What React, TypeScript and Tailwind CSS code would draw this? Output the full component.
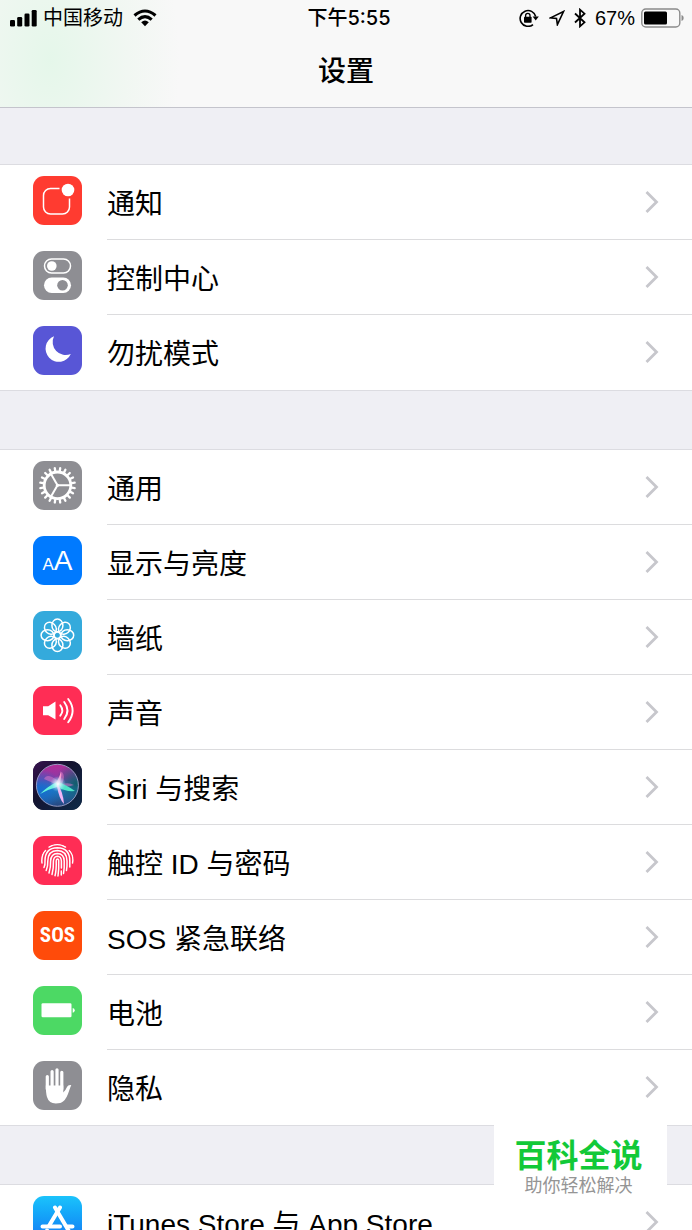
import type { ReactNode } from 'react'

interface Row {
  label: string
  icon: ReactNode
}

interface TileProps {
  className: string
  children: ReactNode
}

const Tile = ({ className, children }: TileProps) => (
  <svg
    viewBox="0 0 49 49"
    aria-hidden="true"
    className={`size-[49px] rounded-[11px] ${className}`}
  >
    {children}
  </svg>
)

const TextTile = ({ className, children }: TileProps) => (
  <span
    aria-hidden="true"
    className={`size-[49px] rounded-[11px] flex justify-center text-white ${className}`}
  >
    {children}
  </span>
)

const NotificationsIcon = () => (
  <Tile className="bg-[#ff3b30]">
    <path
      d="M26.5 12.5H17.5a7 7 0 0 0-7 7V31a7 7 0 0 0 7 7H29.5a7 7 0 0 0 7-7V22.5"
      fill="none"
      stroke="white"
      strokeWidth="1.5"
    />
    <circle cx="35" cy="14" r="6.3" fill="white" />
  </Tile>
)

const ControlCenterIcon = () => (
  <Tile className="bg-[#8e8e93]">
    <rect x="11.5" y="8" width="26" height="14" rx="7" fill="none" stroke="white" strokeWidth="1.5" />
    <circle cx="18.8" cy="15" r="4.8" fill="white" />
    <rect x="11" y="26.5" width="27" height="15.5" rx="7.7" fill="white" />
    <circle cx="29.5" cy="34.2" r="5.3" fill="#8e8e93" />
  </Tile>
)

const MoonIcon = () => (
  <Tile className="bg-[#5856d6]">
    <path d="M21 10.3A13.2 13.2 0 1 0 37.8 28A13 13 0 0 1 21 10.3Z" fill="white" />
  </Tile>
)

const GearIcon = () => (
  <Tile className="bg-[#8e8e93]">
    <g transform="translate(24.5 24.3)" stroke="white" fill="none">
      <circle r="13.3" strokeWidth="2.8" />
      {Array.from({ length: 20 }, (_, i) => (
        <path key={i} d="M14.5 0H17.4" strokeWidth="2.3" strokeLinecap="round" transform={`rotate(${i * 18 + 9})`} />
      ))}
      {[0, 120, 240].map((angle) => (
        <path key={angle} d="M0 0H13" strokeWidth="2" transform={`rotate(${angle})`} />
      ))}
      <circle r="1.6" fill="white" stroke="none" />
    </g>
  </Tile>
)

const DisplayIcon = () => (
  <TextTile className="bg-[#007aff] items-baseline leading-[49px] font-['Liberation_Sans',sans-serif]">
    <span className="text-[17px] font-medium">A</span>
    <span className="text-[28px]">A</span>
  </TextTile>
)

const WallpaperIcon = () => (
  <Tile className="bg-[#34aadc]">
    <g transform="translate(24.4 24.3)" stroke="white" strokeWidth="1.5" fill="none">
      {[0, 45, 90, 135, 180, 225, 270, 315].map((angle) => (
        <ellipse key={angle} cy="-9.9" rx="5.5" ry="6.4" transform={`rotate(${angle})`} />
      ))}
      <circle r="3.2" />
    </g>
  </Tile>
)

const SoundIcon = () => (
  <Tile className="bg-[#ff2d55]">
    <path d="M10 20.2h5.2L22.5 15.5V33.5L15.2 29.2H10Z" fill="white" />
    <g fill="none" stroke="white" strokeWidth="1.9" strokeLinecap="round">
      <path d="M27.3 19.3Q31.3 24.5 27.3 29.7" />
      <path d="M31.2 16Q37.8 24.5 31.2 33" />
      <path d="M35.2 13Q44 24.5 35.2 36.3" />
    </g>
  </Tile>
)

const SiriIcon = () => (
  <Tile className="bg-[#171635]">
    <defs>
      <linearGradient id="siri-bg" x1="0" y1="0" x2="1" y2="1">
        <stop offset="0" stopColor="#3a1150" />
        <stop offset="0.4" stopColor="#14132f" />
        <stop offset="1" stopColor="#0d2b49" />
      </linearGradient>
      <linearGradient id="siri-orb" x1="0.4" y1="0" x2="0.5" y2="1">
        <stop offset="0" stopColor="#b52c98" />
        <stop offset="0.35" stopColor="#8a3aa5" />
        <stop offset="0.6" stopColor="#1e7fc2" />
        <stop offset="1" stopColor="#27457f" />
      </linearGradient>
      <radialGradient id="siri-left" cx="0.1" cy="0.6" r="0.5">
        <stop offset="0" stopColor="#156bd0" />
        <stop offset="1" stopColor="#156bd0" stopOpacity="0" />
      </radialGradient>
      <radialGradient id="siri-right" cx="0.95" cy="0.45" r="0.5">
        <stop offset="0" stopColor="#115c6b" />
        <stop offset="1" stopColor="#115c6b" stopOpacity="0" />
      </radialGradient>
      <radialGradient id="siri-glow">
        <stop offset="0" stopColor="white" />
        <stop offset="0.4" stopColor="#d8f4ff" stopOpacity="0.7" />
        <stop offset="1" stopColor="#8fd8ff" stopOpacity="0" />
      </radialGradient>
    </defs>
    <rect width="49" height="49" fill="url(#siri-bg)" />
    <circle cx="24.4" cy="24.3" r="21" fill="url(#siri-orb)" />
    <circle cx="24.4" cy="24.3" r="21" fill="url(#siri-left)" />
    <circle cx="24.4" cy="24.3" r="21" fill="url(#siri-right)" />
    <path d="M11 18Q13 13 19 16Q24 18 26 22Q27 10 29 11Q33 15 29 23Q36 21 41 24Q34 27 26 25Q16 20 11 18Z" fill="#e879c9" opacity="0.5" />
    <path d="M7 33Q15 25 24 21Q29 22 24 26Q16 28 7 33Z" fill="#63f2dd" />
    <path d="M24 21Q32 23 42 30Q33 31 24 26Z" fill="#4de3c7" />
    <path d="M24 22Q30 30 31 43Q26 38 24 25Z" fill="#f3b5f5" />
    <path d="M23 22Q27 15 28 10Q29 17 26 24Z" fill="#ff9ad2" />
    <circle cx="25" cy="23" r="8" fill="url(#siri-glow)" />
    <circle cx="24.4" cy="24.3" r="21" fill="none" stroke="#a5a9cf" strokeWidth="1" opacity="0.85" />
  </Tile>
)

const FingerprintIcon = () => (
  <Tile className="bg-[#ff2d55]">
    <clipPath id="finger">
      <circle cx="24.3" cy="24.5" r="16.6" />
    </clipPath>
    <g fill="none" stroke="white" strokeWidth="1.5" strokeLinecap="round" clipPath="url(#finger)">
      <path d="M16 11Q24.3 6 32.5 11" />
      <path d="M9 27Q8 19 12.5 14.5M36.2 14.5Q41 19 39.6 27" />
      <path d="M11 31.5Q12.3 29 12 25Q12 12 24.3 11.8Q36.7 12 36.8 25V31" />
      <path d="M13.2 34.5Q15 30 14.8 25Q15 14.8 24.3 14.6Q33.8 14.8 34 25Q34.2 30 33.5 34.5" />
      <path d="M16 37Q17.8 31 17.6 25Q18 17.6 24.3 17.4Q31 17.6 31.2 25Q31.5 32 30.5 37.5" />
      <path d="M19 38.5Q20.7 32 20.4 25Q20.8 20.3 24.3 20.2Q28.2 20.3 28.4 25V32M28.3 35V39" />
      <path d="M22 39.8Q23.5 34 23.2 25Q23.3 23 24.4 23Q25.7 23 25.7 25Q26 34 25 40" />
    </g>
  </Tile>
)

const SosIcon = () => (
  <TextTile className="bg-[#ff4b0a] items-center text-[21px] font-bold font-['Liberation_Sans_Narrow','Roboto_Condensed',Roboto,sans-serif]">
    SOS
  </TextTile>
)

const BatteryIcon = () => (
  <Tile className="bg-[#4cd964]">
    <rect x="8.5" y="17.3" width="30" height="14" rx="1.3" fill="white" />
    <path d="M39.7 22Q41.7 22.3 41.7 24.3T39.7 26.8Z" fill="white" />
  </Tile>
)

const HandIcon = () => (
  <Tile className="bg-[#8e8e93]">
    <path
      d="M14.3 15.5V28M19.1 10.5V28M24 8.8V28M28.8 11.3V28"
      stroke="white"
      strokeWidth="3.2"
      strokeLinecap="round"
    />
    <path
      d="M12.8 24.5H30.3V31.5Q32.8 29 34 26Q35.2 23.6 38.3 24.2Q37.3 25.8 36.2 29.5Q33.8 37.5 30.3 40.3Q28 42.5 22.8 42.5Q15.8 42.3 14 36Q12.8 32 12.8 24.5Z"
      fill="white"
    />
  </Tile>
)

const StoreIcon = () => (
  <Tile className="bg-linear-to-b from-[#1cc3fb] to-[#1d6ff2]">
    <g stroke="white" strokeWidth="4" strokeLinecap="round">
      <path d="M27 11.5L16.5 29M14 34.5L12.5 37" />
      <path d="M22 11.5L37 37" />
      <path d="M9.5 30.5H27M34.5 30.5H39.5" />
    </g>
  </Tile>
)

const sections: Row[][] = [
  [
    { label: '通知', icon: <NotificationsIcon /> },
    { label: '控制中心', icon: <ControlCenterIcon /> },
    { label: '勿扰模式', icon: <MoonIcon /> },
  ],
  [
    { label: '通用', icon: <GearIcon /> },
    { label: '显示与亮度', icon: <DisplayIcon /> },
    { label: '墙纸', icon: <WallpaperIcon /> },
    { label: '声音', icon: <SoundIcon /> },
    { label: 'Siri 与搜索', icon: <SiriIcon /> },
    { label: '触控 ID 与密码', icon: <FingerprintIcon /> },
    { label: 'SOS 紧急联络', icon: <SosIcon /> },
    { label: '电池', icon: <BatteryIcon /> },
    { label: '隐私', icon: <HandIcon /> },
  ],
  [{ label: 'iTunes Store 与 App Store', icon: <StoreIcon /> }],
]

const StatusBar = () => (
  <div className="grid grid-cols-[1fr_auto_1fr] items-center h-[35px] pl-2.5 pr-2 text-[20px] leading-6">
    <div className="flex items-center gap-1.5">
      <svg viewBox="0 0 27 18" aria-hidden="true" className="w-[27px] h-[18px]">
        <rect x="0" y="11" width="5" height="6.5" rx="1.3" />
        <rect x="7.2" y="8" width="5" height="9.5" rx="1.3" />
        <rect x="14.5" y="4.5" width="5" height="13" rx="1.3" />
        <rect x="21.7" y="1" width="5" height="16.5" rx="1.3" />
      </svg>
      <span>中国移动</span>
      <svg viewBox="0 0 24 18" aria-hidden="true" className="w-6 h-[18px] ml-1">
        <g fill="none" stroke="black" strokeWidth="3.1">
          <path d="M1.5 6.5Q12 -2.5 22.5 6.5" />
          <path d="M5.3 10.6Q12 4.6 18.7 10.6" />
        </g>
        <path d="M8.2 13.3Q12 9.9 15.8 13.3L12 17.3Z" />
      </svg>
    </div>
    <time className="pl-1 font-medium font-['Inter','Noto_Sans_CJK_SC',sans-serif]">下午5:55</time>
    <div className="flex items-center justify-end">
      <svg viewBox="0 0 20 18" aria-hidden="true" className="w-5 h-[18px] mr-2.5">
        <path d="M14 15.6A7.9 7.9 0 1 1 16.7 7.5" fill="none" stroke="black" strokeWidth="1.6" />
        <path d="M13.6 7.5H19.8L16.7 11.5Z" />
        <rect x="5" y="7.8" width="7.6" height="6" rx="0.7" />
        <path d="M6.6 8.3V6.5a2.2 2.2 0 0 1 4.4 0V8.3" fill="none" stroke="black" strokeWidth="1.3" />
      </svg>
      <svg viewBox="0 0 16 16" aria-hidden="true" className="size-4 mr-2">
        <path d="M1.5 7.9L14.5 1.5L8.4 14.6L7.5 8.5Z" fill="none" stroke="black" strokeWidth="1.6" />
      </svg>
      <svg viewBox="0 0 14 20" aria-hidden="true" className="w-3.5 h-5 mr-2">
        <path d="M2 5.5L11.5 14.3L7 18.3V1.7L11.5 5.7L2 14.5" fill="none" stroke="black" strokeWidth="1.8" />
      </svg>
      <span>67%</span>
      <svg viewBox="0 0 43 20" aria-hidden="true" className="w-[43px] h-5 ml-1.5">
        <rect x="0.8" y="1" width="38" height="18" rx="4" fill="none" stroke="#8b8b8b" strokeWidth="1.4" />
        <rect x="3" y="3.5" width="23" height="13" rx="1.5" />
        <path d="M40.5 7Q42.7 7.5 42.7 10T40.5 13Z" fill="#8b8b8b" />
      </svg>
    </div>
  </div>
)

const Header = () => (
  <header className="shrink-0 border-b border-[#c4c4cc] bg-[#f8f8f8] bg-[radial-gradient(ellipse_130px_200px_at_50px_60px,#e5f7ea,#f1f7f2_60%,transparent)]">
    <StatusBar />
    <h1 className="h-[72px] text-center text-[28px] leading-[74px] font-medium">设置</h1>
  </header>
)

const SettingsRow = ({ label, icon }: Row) => (
  <li className="group">
    <a href="#" className="flex items-center gap-[25px] pl-[33px]">
      <span className="shrink-0 mb-1">{icon}</span>
      <span className="flex-1 flex items-center justify-between h-[75px] pr-8 border-b border-[#dcdcde] group-last:border-transparent">
        <span className="text-[28px] leading-9 pt-1.5 whitespace-nowrap">{label}</span>
        <svg viewBox="0 0 16 24" aria-hidden="true" className="w-4 h-6">
          <path d="M2.5 2L12.5 12L2.5 22" fill="none" stroke="#c7c7cc" strokeWidth="2.8" />
        </svg>
      </span>
    </a>
  </li>
)

export default function App() {
  return (
    <div
      lang="zh-CN"
      className="h-screen flex flex-col overflow-hidden bg-[#efeff4] text-black font-['Liberation_Sans','Noto_Sans_CJK_SC',sans-serif]"
    >
      <Header />
      <main className="flex-1 min-h-0 flex flex-col gap-[58px] pt-14 overflow-y-auto [scrollbar-width:none]">
        {sections.map((rows) => (
          <ul key={rows[0].label} className="shrink-0 bg-white border-y border-[#dcdce1]">
            {rows.map((row) => (
              <SettingsRow key={row.label} {...row} />
            ))}
          </ul>
        ))}
      </main>
      <aside className="fixed right-[25px] bottom-7 w-[173px] pt-4 pr-1 pb-1 bg-white text-center">
        <p className="text-[32px] leading-9 font-bold text-[#12c938]">百科全说</p>
        <p className="text-[18px] leading-6 text-[#959595]">助你轻松解决</p>
      </aside>
    </div>
  )
}
